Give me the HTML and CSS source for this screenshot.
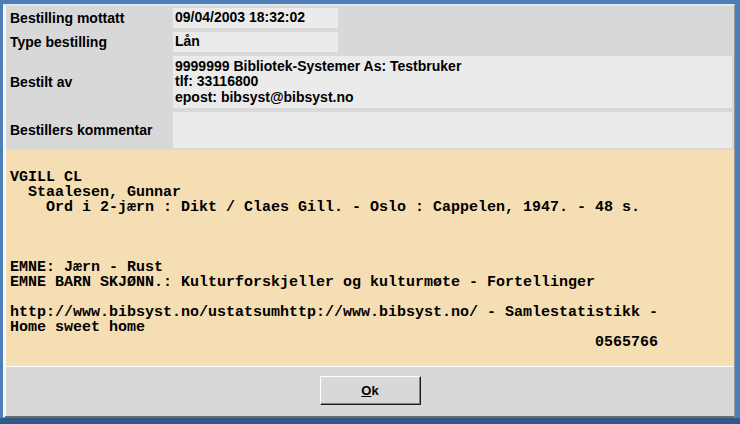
FILE: index.html
```html
<!DOCTYPE html>
<html lang="no">
<head>
    <meta charset="UTF-8">
    <title>Bestilling</title>
    <link rel="stylesheet" href="styles.css">
</head>
<body>
    <div class="window">
        <div class="details">
            <div class="label">Bestilling mottatt</div>
            <div class="value"><span class="box short">09/04/2003 18:32:02</span></div>

            <div class="label">Type bestilling</div>
            <div class="value"><span class="box short">Lån</span></div>

            <div class="label tall">Bestilt av</div>
            <div class="value tall"><span class="box wide">9999999 Bibliotek-Systemer As: Testbruker<br>tlf: 33116800<br>epost: bibsyst@bibsyst.no</span></div>

            <div class="label comment">Bestillers kommentar</div>
            <div class="value comment"><span class="box wide"></span></div>
        </div>

        <pre class="record">

VGILL CL
  Staalesen, Gunnar
    Ord i 2-jærn : Dikt / Claes Gill. - Oslo : Cappelen, 1947. - 48 s.



EMNE: Jærn - Rust
EMNE BARN SKJØNN.: Kulturforskjeller og kulturmøte - Fortellinger

http://www.bibsyst.no/ustatsumhttp://www.bibsyst.no/ - Samlestatistikk -
Home sweet home
                                                                 0565766</pre>

        <div class="footer">
            <button class="ok"><u>O</u>k</button>
        </div>
    </div>
</body>
</html>
```

FILE: styles.css
```css
:root {
    --frame-blue: #4c7fb8;
    --frame-dark: #2d5a8b;
    --panel: #d8d8d8;
    --field: #ebebeb;
    --record-bg: #f5deb3;
}

* {
    margin: 0;
    padding: 0;
    box-sizing: border-box;
}

html, body {
    height: 100%;
}

body {
    background: linear-gradient(var(--frame-blue) 418px, var(--frame-dark) 418px);
    font-family: 'Liberation Sans', Arial, sans-serif;
    padding: 4px 5px 6px 3px;
    overflow: hidden;
}

.window {
    height: 414px;
    background-color: var(--panel);
    border-left: 3px solid #f4f7fb;
    border-top: 2px solid #dfe8f2;
    border-right: 1px solid #9a9a9a;
    border-bottom: 2px solid #6b6b6b;
    display: flex;
    flex-direction: column;
}

.details {
    display: grid;
    grid-template-columns: 166px 1fr;
    grid-template-rows: 20px 20px 52px 36px;
    column-gap: 1px;
    row-gap: 4px;
    padding: 2px 2px 2px 0;
    height: 144px;
}

.label {
    display: flex;
    align-items: center;
    padding-left: 4px;
    font-size: 14px;
    font-weight: bold;
    color: #000;
}

.value {
    display: flex;
}

.box {
    display: flex;
    align-items: center;
    background-color: var(--field);
    padding-left: 2px;
    font-size: 14px;
    font-weight: bold;
    line-height: 15.5px;
    color: #000;
}

.short {
    width: 165px;
}

.wide {
    flex: 1;
}

.record {
    height: 217px;
    background-color: var(--record-bg);
    border-bottom: 1px solid #ffffff;
    padding: 5px 0 0 4px;
    font-family: 'Liberation Mono', 'Courier New', monospace;
    font-size: 15px;
    font-weight: bold;
    line-height: 15px;
    color: #000;
}

.footer {
    flex: 1;
    display: flex;
    align-items: center;
    justify-content: center;
    padding-bottom: 2px;
}

.ok {
    width: 101px;
    height: 29px;
    background-color: var(--panel);
    border: 1px solid;
    border-color: #ffffff #1e1e1e #1e1e1e #ffffff;
    box-shadow: inset -1px -1px 0 #808080;
    font-family: 'Liberation Sans', Arial, sans-serif;
    font-size: 13px;
    font-weight: bold;
    color: #000;
}
```
